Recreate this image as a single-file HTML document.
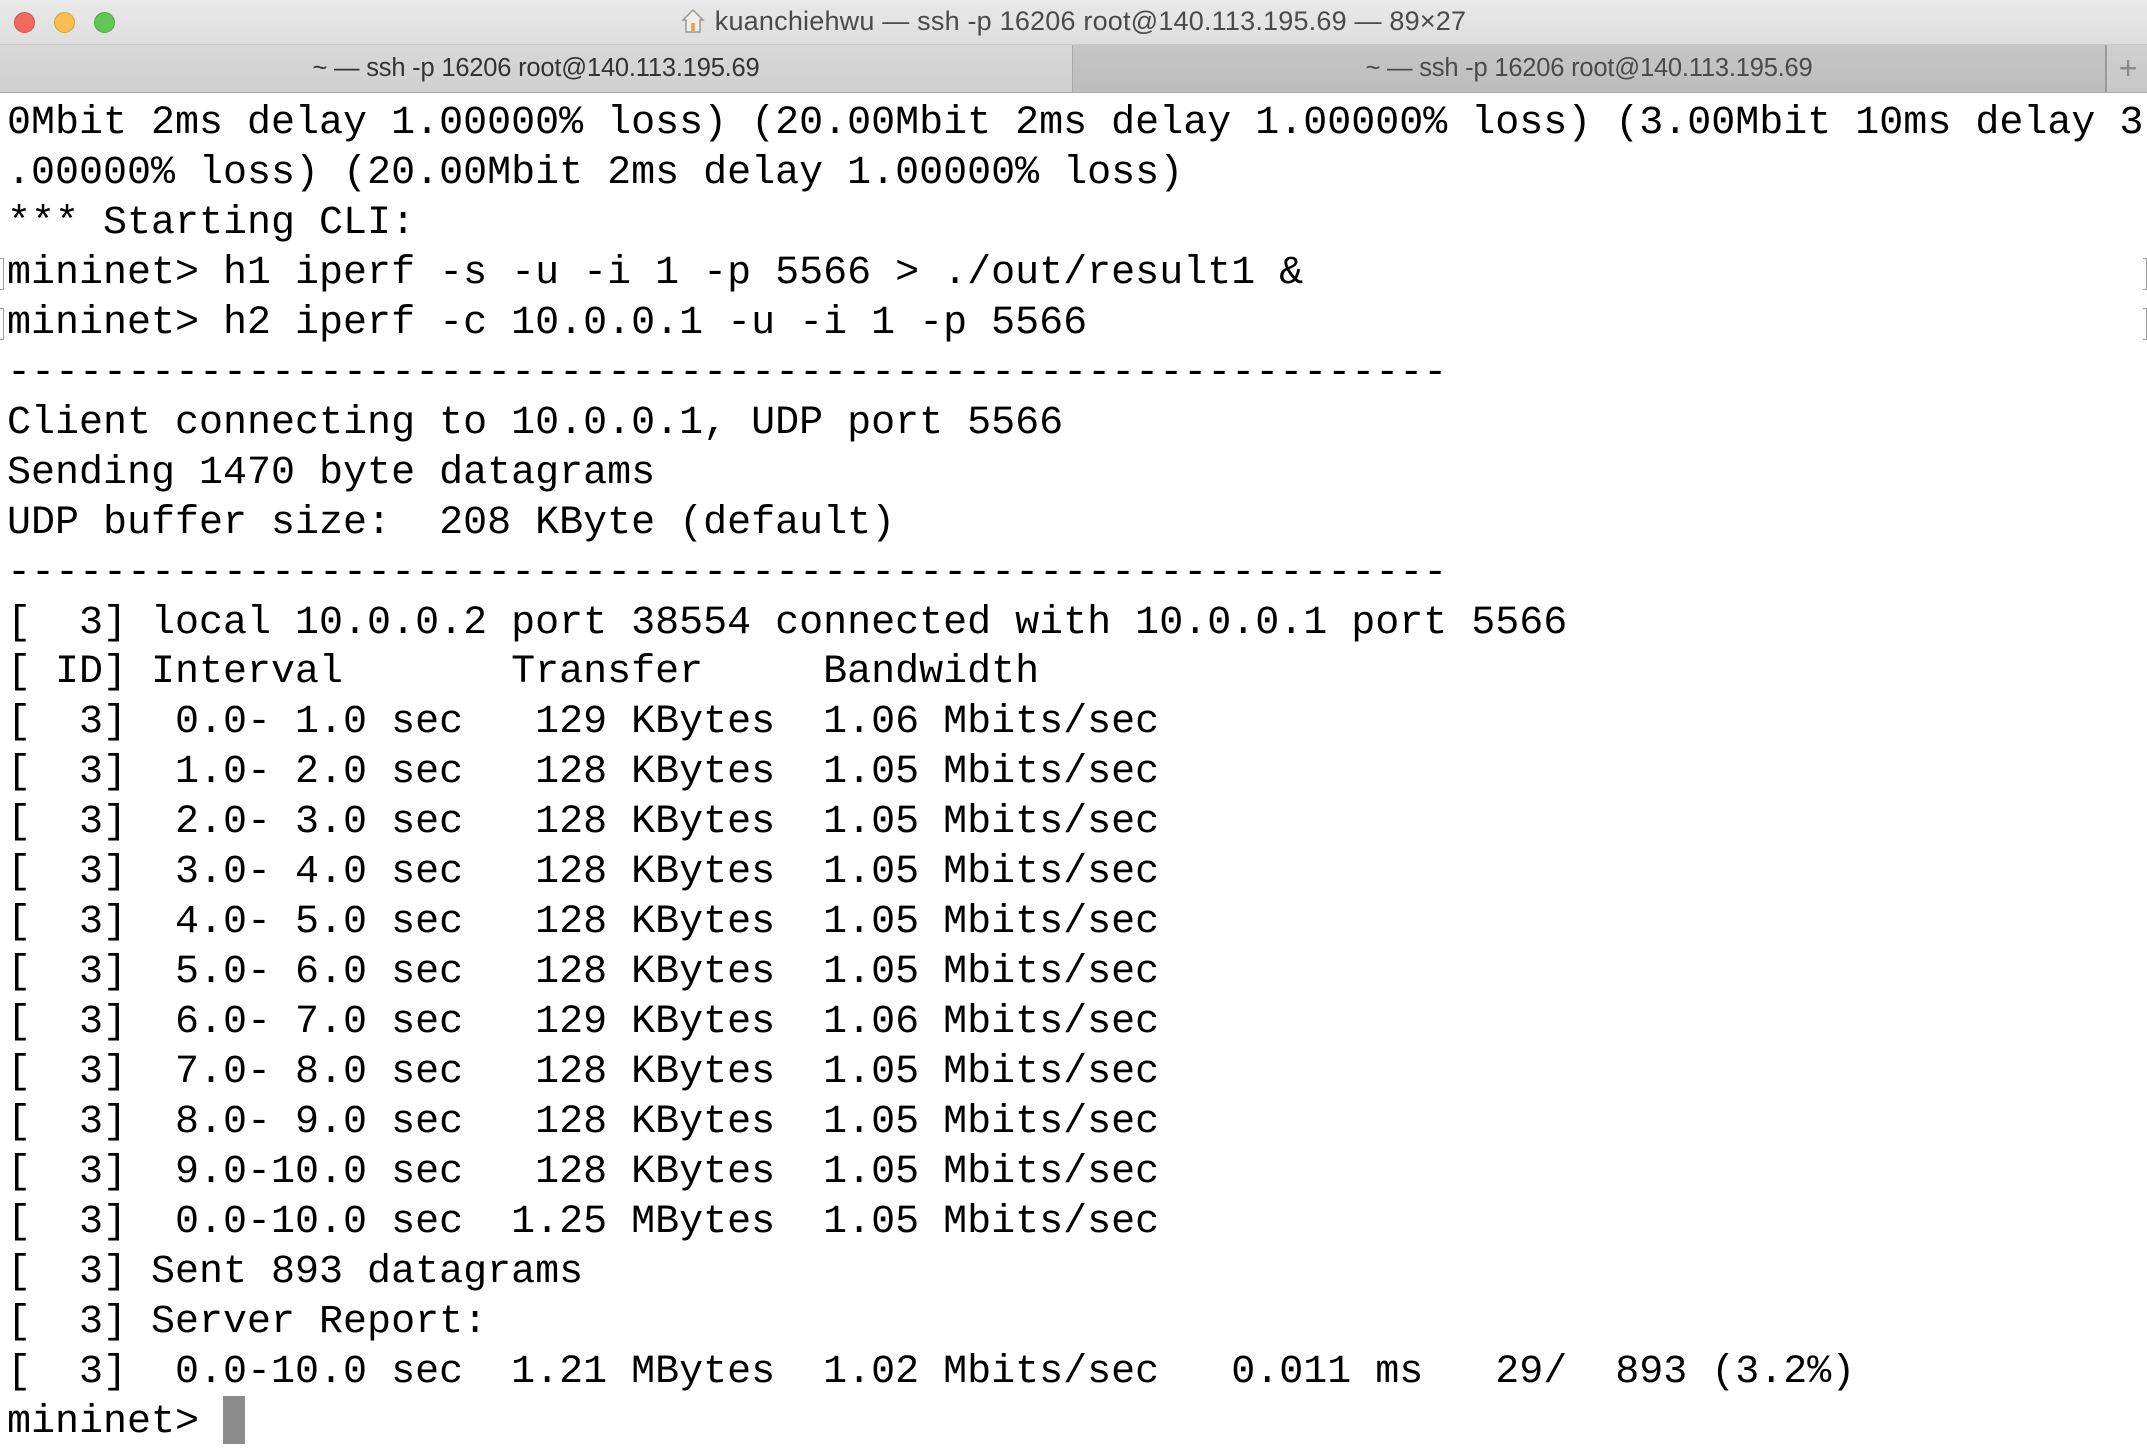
<!DOCTYPE html>
<html><head><meta charset="utf-8"><style>
html,body{margin:0;padding:0;}
body{width:2147px;height:1451px;overflow:hidden;background:#fff;position:relative;font-family:"Liberation Sans",sans-serif;}
#title{position:absolute;left:0;top:0;width:2147px;height:44px;background:linear-gradient(#e9e9e9,#dedede);border-bottom:1px solid #c6c6c6;}
.tl{position:absolute;top:12px;width:19px;height:19px;border-radius:50%;}
#ttext{position:absolute;left:0;width:2147px;top:6px;text-align:center;font-size:27px;color:#4a4a4a;letter-spacing:0.2px;}
#tabs{position:absolute;left:0;top:45px;width:2147px;height:47px;border-bottom:1px solid #a9a9a9;}
.tab{position:absolute;top:0;height:47px;text-align:center;font-size:25.5px;line-height:47px;letter-spacing:-0.2px;}
pre{position:absolute;left:7px;top:99px;margin:0;font-family:"Liberation Mono",monospace;font-size:40px;line-height:49.95px;color:#000;}
</style></head><body>
<div id="title">
<div class="tl" style="left:14px;background:#ee6a5f;border:0.5px solid #d45347"></div>
<div class="tl" style="left:54px;background:#f5be4f;border:0.5px solid #d9a23a"></div>
<div class="tl" style="left:94px;background:#62c655;border:0.5px solid #4fa83f"></div>
<div id="ttext"><svg width="24" height="26" viewBox="0 0 24 26" style="vertical-align:-4px;margin-right:10px"><path d="M12 2 L22 12 L19 12 L19 24 L5 24 L5 12 L2 12 Z" fill="#f4efe8" stroke="#999" stroke-width="1.5"/><rect x="10" y="15" width="4" height="9" fill="#e0a860"/></svg>kuanchiehwu — ssh -p 16206 root@140.113.195.69 — 89×27</div>
</div>
<div id="tabs">
<div class="tab" style="left:0;width:1072px;background:linear-gradient(#d8d8d8,#d0d0d0);color:#333;">~ — ssh -p 16206 root@140.113.195.69</div>
<div class="tab" style="left:1072px;width:1032px;background:linear-gradient(#c6c6c6,#bdbdbd);color:#4a4a4a;border-left:1px solid #a9a9a9;">~ — ssh -p 16206 root@140.113.195.69</div>
<div class="tab" style="left:2105px;width:42px;background:linear-gradient(#d0d0d0,#c8c8c8);color:#888;border-left:2px solid #9a9a9a;font-size:32px;">+</div>
</div>
<pre>0Mbit 2ms delay 1.00000% loss) (20.00Mbit 2ms delay 1.00000% loss) (3.00Mbit 10ms delay 3
.00000% loss) (20.00Mbit 2ms delay 1.00000% loss)
*** Starting CLI:
mininet> h1 iperf -s -u -i 1 -p 5566 > ./out/result1 &
mininet> h2 iperf -c 10.0.0.1 -u -i 1 -p 5566
------------------------------------------------------------
Client connecting to 10.0.0.1, UDP port 5566
Sending 1470 byte datagrams
UDP buffer size:  208 KByte (default)
------------------------------------------------------------
[  3] local 10.0.0.2 port 38554 connected with 10.0.0.1 port 5566
[ ID] Interval       Transfer     Bandwidth
[  3]  0.0- 1.0 sec   129 KBytes  1.06 Mbits/sec
[  3]  1.0- 2.0 sec   128 KBytes  1.05 Mbits/sec
[  3]  2.0- 3.0 sec   128 KBytes  1.05 Mbits/sec
[  3]  3.0- 4.0 sec   128 KBytes  1.05 Mbits/sec
[  3]  4.0- 5.0 sec   128 KBytes  1.05 Mbits/sec
[  3]  5.0- 6.0 sec   128 KBytes  1.05 Mbits/sec
[  3]  6.0- 7.0 sec   129 KBytes  1.06 Mbits/sec
[  3]  7.0- 8.0 sec   128 KBytes  1.05 Mbits/sec
[  3]  8.0- 9.0 sec   128 KBytes  1.05 Mbits/sec
[  3]  9.0-10.0 sec   128 KBytes  1.05 Mbits/sec
[  3]  0.0-10.0 sec  1.25 MBytes  1.05 Mbits/sec
[  3] Sent 893 datagrams
[  3] Server Report:
[  3]  0.0-10.0 sec  1.21 MBytes  1.02 Mbits/sec   0.011 ms   29/  893 (3.2%)
mininet> </pre>
<div style="position:absolute;left:223px;top:1396px;width:22px;height:48px;background:#8c8c8c"></div>
<div style="position:absolute;left:0;top:258px;width:3px;height:30px;border:1px solid #999;border-left:none;"></div>
<div style="position:absolute;left:0;top:308px;width:3px;height:30px;border:1px solid #999;border-left:none;"></div>
<div style="position:absolute;left:2143px;top:258px;width:3px;height:30px;border:1px solid #999;border-left:none;"></div>
<div style="position:absolute;left:2143px;top:308px;width:3px;height:30px;border:1px solid #999;border-left:none;"></div>
</body></html>
